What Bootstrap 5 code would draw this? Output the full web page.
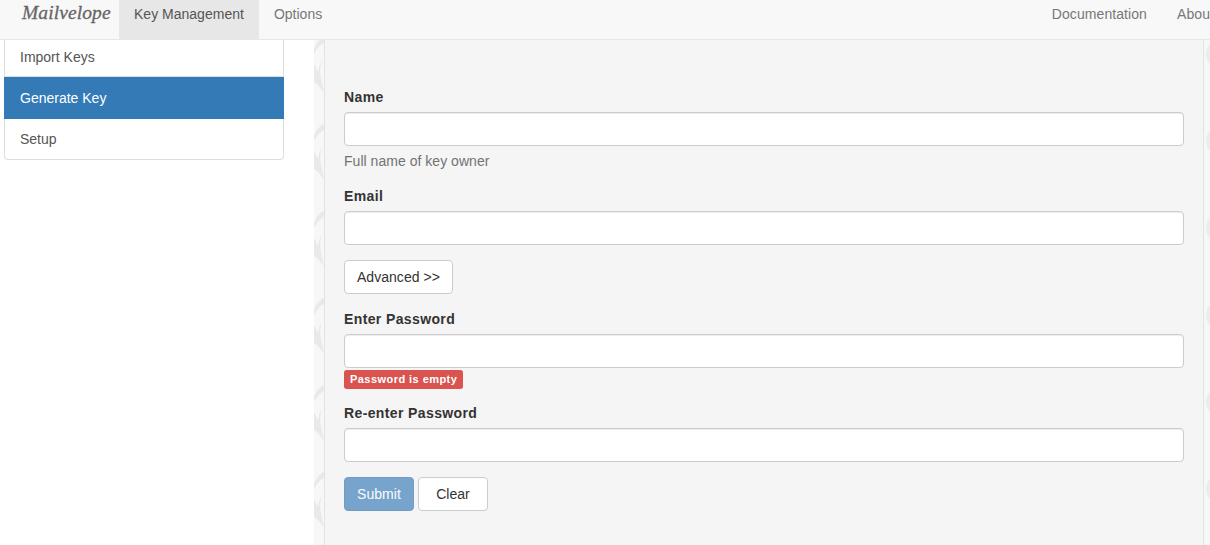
<!DOCTYPE html>
<html lang="en">
<head>
<meta charset="utf-8">
<title>Mailvelope</title>
<link href="https://cdn.jsdelivr.net/npm/bootstrap@5.3.0/dist/css/bootstrap.min.css" rel="stylesheet">
<style>
html,body{height:545px;overflow:hidden}
body{font-family:"Liberation Sans",Arial,sans-serif;font-size:14px;line-height:20px;color:#333;background:#fff}
.mv-top{height:40px;background:#f8f8f8;border-bottom:1px solid #e7e7e7;padding:0 0 0 4px;flex-wrap:nowrap;align-items:flex-start;justify-content:flex-start}
.mv-brand{width:115px;margin:0;padding:0 0 0 18px;font-family:"Liberation Serif",serif;font-style:italic;font-size:19.5px;line-height:25px;color:#666;letter-spacing:.1px;-webkit-text-stroke:.3px #666}
.mv-brand:hover{color:#666}
.mv-nav{flex-wrap:nowrap}
.mv-nav .nav-link{padding:4px 15px 15px;height:39px;color:#777;line-height:20px;font-size:14px;letter-spacing:.01px;white-space:nowrap}
.mv-nav .nav-link.active{background:#e7e7e7;color:#555}
.mv-right{margin-left:auto;margin-right:-19px}
.mv-right .nav-link{letter-spacing:.08px}
.mv-main{height:505px}
.mv-side{width:314px;padding-left:4px;background:#fff}
.mv-list{width:280px;border-radius:0 0 4px 4px}
.mv-list .list-group-item{color:#555;padding:10px 15px;line-height:20px;font-size:14px;border:1px solid #ddd;background:#fff}
.mv-list .list-group-item:first-child{height:37px;padding-top:7px;border-top:0;border-radius:0}
.mv-list .list-group-item.active{height:42px;padding-top:10px;margin-top:0;background:#337ab7;border:1px solid #337ab7;color:#fff}
.mv-list .list-group-item:last-child{height:41px;border-top:0;border-radius:0 0 4px 4px}
.mv-tex{flex:1 1 auto;min-width:0;padding:0 6px 0 10px;background-color:#f7f7f7;
background-image:url("data:image/svg+xml,%3Csvg xmlns='http://www.w3.org/2000/svg' width='10' height='87'%3E%3Cg fill='%23e9e9e9'%3E%3Cpath d='M0 24Q2 28 4 32Q5 25 8 20Q5 30 7 38L10 52L7 49Q4 44 0 42Z'/%3E%3Cpath id='a' d='M0 9Q3 0 10-3V3Q4 6 0 14Z'/%3E%3Cpath d='M0 96Q3 87 10 84V90Q4 93 0 101Z'/%3E%3C/g%3E%3C/svg%3E"),
url("data:image/svg+xml,%3Csvg xmlns='http://www.w3.org/2000/svg' width='6' height='87'%3E%3Ccircle cx='17' cy='14' r='15' fill='%23ececec'/%3E%3C/svg%3E");
background-repeat:repeat-y;background-size:10px 87px,6px 87px;background-position:left top,right top}
.mv-pane{height:100%;background:#f5f5f5;border:1px solid #e3e3e3;border-top:0;border-bottom:0;padding:47px 19px 0}
.mv-lab{font-weight:700;display:block;margin-bottom:5px;line-height:20px;letter-spacing:.38px}
.mv-in{height:34px;padding:6px 12px;font-size:14px;line-height:20px;background:#fff;border:1px solid #ccc;border-radius:4px;box-shadow:inset 0 1px 1px rgba(0,0,0,.075)}
.mv-help{color:#737373;margin-top:5px;margin-bottom:15px;line-height:20px;font-size:14px;letter-spacing:.03px}
.mv-grp{margin-bottom:15px}
.mv-btn{height:34px;padding:6px 12px;font-size:14px;line-height:20px;border:1px solid #ccc;border-radius:4px;background:#fff;color:#333;letter-spacing:.03px}
.mv-clear{width:70px;padding:6px 0;text-align:center}
.mv-sub{width:70px;padding:6px 0;--bs-btn-disabled-bg:#337ab7;--bs-btn-disabled-border-color:#2e6da4;--bs-btn-disabled-color:#fff;--bs-btn-disabled-opacity:.65}
.mv-err{display:inline-block;background:#d9534f;color:#fff;font-size:11px;font-weight:700;line-height:13px;padding:3px 6px;border-radius:2.75px;letter-spacing:.45px;vertical-align:top}
.mv-errw{height:19px;margin-top:2px;margin-bottom:14px}
</style>
</head>
<body>
<nav class="navbar mv-top">
  <a class="navbar-brand mv-brand" href="#">Mailvelope</a>
  <ul class="nav mv-nav">
    <li class="nav-item"><a class="nav-link active" href="#">Key Management</a></li>
    <li class="nav-item"><a class="nav-link" href="#">Options</a></li>
  </ul>
  <ul class="nav mv-nav mv-right">
    <li class="nav-item"><a class="nav-link" href="#">Documentation</a></li>
    <li class="nav-item"><a class="nav-link" href="#">About</a></li>
  </ul>
</nav>
<div class="mv-main d-flex">
  <aside class="mv-side flex-shrink-0">
    <div class="list-group mv-list">
      <a class="list-group-item" href="#">Import Keys</a>
      <a class="list-group-item active" href="#">Generate Key</a>
      <a class="list-group-item" href="#">Setup</a>
    </div>
  </aside>
  <div class="mv-tex">
    <main class="mv-pane">
      <form>
      <div class="mv-grp"><label class="form-label mv-lab">Name</label><input class="form-control mv-in" type="text"><div class="form-text mv-help">Full name of key owner</div></div>
      <div class="mv-grp"><label class="form-label mv-lab">Email</label><input class="form-control mv-in" type="text"></div>
      <div class="mv-grp"><button class="btn mv-btn" type="button">Advanced &gt;&gt;</button></div>
      <div><label class="form-label mv-lab">Enter Password</label><input class="form-control mv-in" type="password"><div class="mv-errw"><span class="badge mv-err">Password is empty</span></div></div>
      <div class="mv-grp"><label class="form-label mv-lab">Re-enter Password</label><input class="form-control mv-in" type="password"></div>
      <div class="d-flex gap-1"><button class="btn btn-primary mv-btn mv-sub" type="button" disabled>Submit</button><button class="btn mv-btn mv-clear" type="button">Clear</button></div>
      </form>
    </main>
  </div>
</div>
<script src="https://cdn.jsdelivr.net/npm/bootstrap@5.3.0/dist/js/bootstrap.bundle.min.js"></script>
</body>
</html>
